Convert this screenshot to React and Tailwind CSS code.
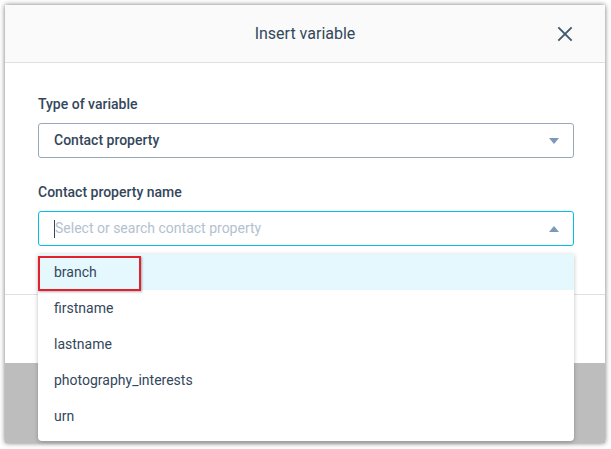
import React from "react";

function Caret({ up }) {
  return (
    <svg width="10" height="6" viewBox="0 0 10 6" className="shrink-0">
      {up ? <path d="M0 6 L5 0 L10 6 Z" fill="#7c98b6" /> : <path d="M0 0 L10 0 L5 6 Z" fill="#7c98b6" />}
    </svg>
  );
}

export default function App() {
  const items = ["branch", "firstname", "lastname", "photography_interests", "urn"];
  return (
    <div className="w-[611px] h-[449px] bg-white pt-[5px] pl-[5px]" style={{ fontFamily: "Roboto, 'Liberation Sans', sans-serif" }}>
      <div className="relative w-[600px] h-[438px] bg-[#bdbdbd] shadow-[0_0_5px_rgba(0,0,0,0.55)] flex flex-col">
        {/* Modal */}
        <div className="h-[358px] bg-white flex flex-col">
          <div className="h-[58px] bg-[#fafafa] border-b border-[#e0e0e0] flex items-center justify-center relative shrink-0">
            <span className="text-[16px] text-[#33475b] leading-none">Insert variable</span>
            <button className="absolute right-[32px] top-[21px] w-[16px] h-[16px] flex items-center justify-center">
              <svg width="18" height="18" viewBox="0 0 18 18">
                <path d="M1.5 1.5 L16.5 16.5 M16.5 1.5 L1.5 16.5" stroke="#425b6e" strokeWidth="2.2" strokeLinecap="butt" />
              </svg>
            </button>
          </div>
          <div className="pl-[33px] pr-[31px] pt-[31px] flex flex-col">
            <label className="text-[14px] leading-[20px] font-medium text-[#33475b]">Type of variable</label>
            <div className="mt-[9px] h-[35px] border border-[#98a9ba] rounded-[3px] flex items-center justify-between pl-[15px] pr-[14px]">
              <span className="text-[14px] font-medium text-[#33475b]">Contact property</span>
              <Caret />
            </div>
            <label className="mt-[24px] text-[14px] leading-[20px] font-medium text-[#33475b]">Contact property name</label>
            <div className="mt-[9px] h-[35px] border border-[#00bfe6] rounded-[3px] flex items-center justify-between pl-[15px] pr-[14px]">
              <div className="flex items-center">
                <span className="w-px h-[18px] bg-[#33475b]" />
                <span className="text-[14px] text-[#b3c1d0]">Select or search contact property</span>
              </div>
              <Caret up />
            </div>
          </div>
          <div className="mt-[48px] border-t border-[#e0e0e0] flex-1" />
        </div>

        {/* Dropdown */}
        <div className="absolute left-[33px] top-[249px] w-[536px] bg-white rounded-b-[4px] shadow-[0_1px_4px_rgba(0,0,0,0.25)] pb-[7px]">
          {items.map((it, i) => (
            <div
              key={it}
              className={
                "h-[36px] flex items-center pl-[16px] text-[14px] text-[#33475b] " +
                (i === 0 ? "bg-[#e5f8fd]" : "")
              }
            >
              {it}
            </div>
          ))}
        </div>

        {/* Annotation */}
        <div className="absolute left-[33px] top-[251px] w-[103px] h-[35px] border-2 border-[#e3202b] shadow-[1px_1px_2px_rgba(0,0,0,0.3)]" />
      </div>
    </div>
  );
}
